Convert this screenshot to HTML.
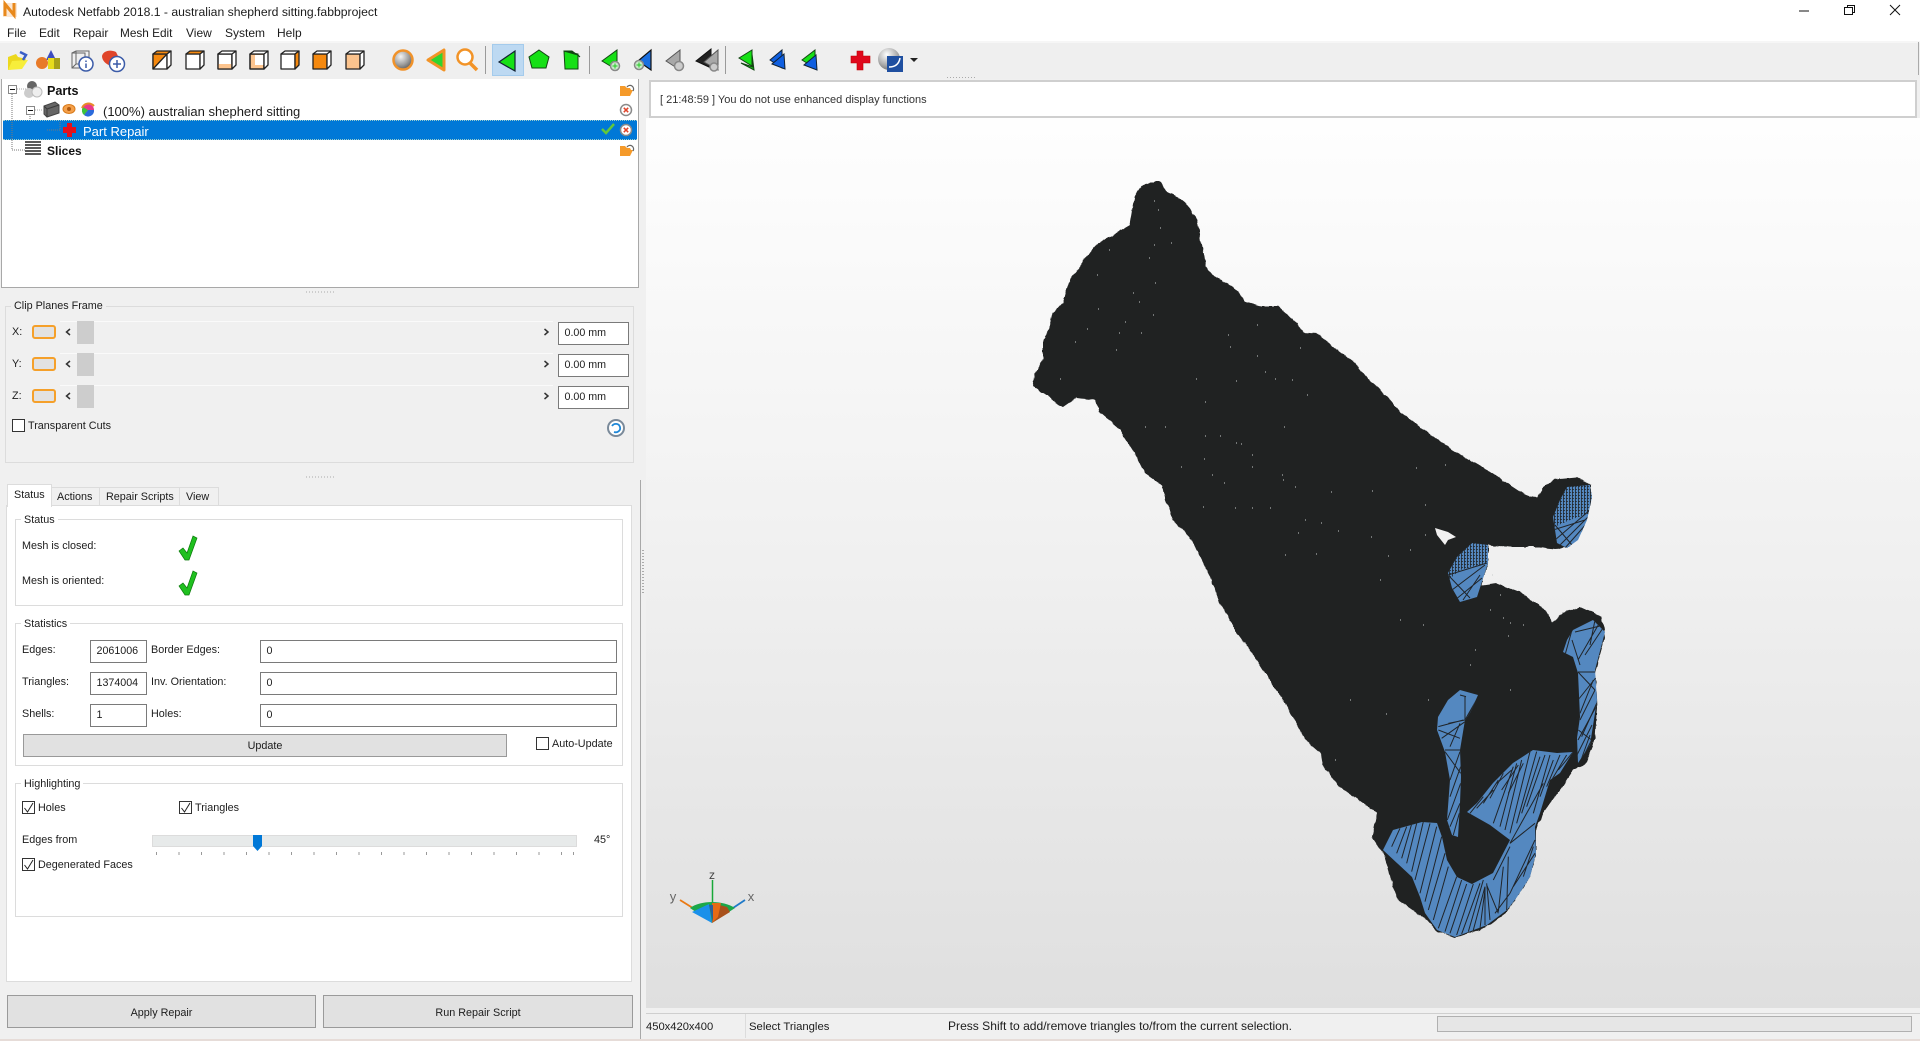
<!DOCTYPE html>
<html><head><meta charset="utf-8"><style>
html,body{margin:0;padding:0;width:1920px;height:1041px;overflow:hidden;background:#f0f0f0}
body{font-family:"Liberation Sans",Arial,sans-serif;font-size:10.8px;color:#1c1c1c;position:relative}
.a,.t,.g,.i,.b,.c{position:absolute;box-sizing:border-box}
.t{white-space:nowrap;line-height:14px;height:14px}
.g{border:1px solid #dcdcdc}
.i{background:#fff;border:1px solid #7a7a7a;height:23px;line-height:21px;padding-left:5.500px;font-size:10.7px}
.b{background:#e1e1e1;border:1px solid #adadad;text-align:center;font-size:10.8px}
.c{width:13px;height:13px;border:1px solid #333;background:#fff}
svg{position:absolute;left:0;top:0}
</style></head><body>
<!-- backgrounds -->
<div class="a" style="left:0;top:0;width:1920px;height:41px;background:#fff"></div>
<div class="a" style="left:0;top:41px;width:1920px;height:38px;background:#efefef;border-top:2px solid #f6f6f6"></div>
<div class="a" style="left:1918px;top:42px;width:1px;height:33px;background:#aaa"></div>
<div class="a" style="left:1px;top:79px;width:638px;height:209px;background:#fff;border:1px solid #a8a8a8;border-top:0"></div>
<div class="a" style="left:646px;top:118px;width:1274px;height:890px;background:linear-gradient(#fefefe,#f0f0f0 50%,#dfdfdf)"></div>
<div class="a" style="left:649px;top:80px;width:1268px;height:38px;background:#fff;border:2px solid #cfcfcf"></div>
<div class="a" style="left:640px;top:480px;width:1px;height:559px;background:#a8a8a8"></div>
<div class="a" style="left:0;top:1039px;width:1920px;height:2px;background:#e6dcd8"></div>
<div class="a" style="left:646px;top:1013px;width:1274px;height:1px;background:#cfcfcf"></div>
<div class="a" style="left:745px;top:1014px;width:1px;height:24px;background:#dcdcdc"></div>
<div class="a" style="left:1437px;top:1016px;width:475px;height:16px;background:#e6e6e6;border:1px solid #b0b0b0"></div>

<!-- title + menu -->
<div class="t" style="left:23px;top:5px;font-size:12.2px">Autodesk Netfabb 2018.1 - australian shepherd sitting.fabbproject</div>
<div class="t" style="left:7px;top:26px;font-size:12px">File</div>
<div class="t" style="left:39px;top:26px;font-size:12px">Edit</div>
<div class="t" style="left:73px;top:26px;font-size:12px">Repair</div>
<div class="t" style="left:120px;top:26px;font-size:11.8px">Mesh Edit</div>
<div class="t" style="left:186px;top:26px;font-size:12px">View</div>
<div class="t" style="left:225px;top:26px;font-size:12px">System</div>
<div class="t" style="left:277px;top:26px;font-size:12px">Help</div>

<!-- tree -->
<div class="a" style="left:3px;top:120px;width:634px;height:20px;background:#0078d7;border-top:1px dotted #9cc;border-bottom:1px dotted #9cc"></div>
<div class="t" style="left:47px;top:84px;font-size:12.6px;font-weight:bold;color:#111">Parts</div>
<div class="t" style="left:103px;top:105px;font-size:13px">(100%) australian shepherd sitting</div>
<div class="t" style="left:83px;top:125px;font-size:13px;color:#fff">Part Repair</div>
<div class="t" style="left:47px;top:144px;font-size:12px;font-weight:bold;color:#111">Slices</div>

<!-- message -->
<div class="t" style="left:660px;top:92.500px;font-size:11px;color:#333">[ 21:48:59 ] You do not use enhanced display functions</div>

<!-- clip frame -->
<div class="g" style="left:5px;top:306px;width:629px;height:157px"></div>
<div class="t" style="left:11px;top:299px;padding:0 3px;background:#f0f0f0">Clip Planes Frame</div>
<div class="t" style="left:12px;top:325px">X:</div><div class="t" style="left:12px;top:357px">Y:</div><div class="t" style="left:12px;top:389px">Z:</div>
<div class="a" style="left:32px;top:325px;width:24px;height:14px;background:#e2e2e2;border:2px solid #f5a02a;border-radius:3px"></div>
<div class="a" style="left:32px;top:357px;width:24px;height:14px;background:#e2e2e2;border:2px solid #f5a02a;border-radius:3px"></div>
<div class="a" style="left:32px;top:389px;width:24px;height:14px;background:#e2e2e2;border:2px solid #f5a02a;border-radius:3px"></div>
<div class="a" style="left:60px;top:321px;width:493px;height:23px;background:#f0f0f0;border-top:1px solid #fafafa"></div>
<div class="a" style="left:60px;top:353px;width:493px;height:23px;background:#f0f0f0;border-top:1px solid #fafafa"></div>
<div class="a" style="left:60px;top:385px;width:493px;height:23px;background:#f0f0f0;border-top:1px solid #fafafa"></div>
<div class="a" style="left:77px;top:321px;width:17px;height:23px;background:#cdcdcd"></div>
<div class="a" style="left:77px;top:353px;width:17px;height:23px;background:#cdcdcd"></div>
<div class="a" style="left:77px;top:385px;width:17px;height:23px;background:#cdcdcd"></div>
<div class="i" style="left:558px;top:322px;width:71px">0.00 mm</div>
<div class="i" style="left:558px;top:354px;width:71px">0.00 mm</div>
<div class="i" style="left:558px;top:386px;width:71px">0.00 mm</div>
<div class="c" style="left:12px;top:419px"></div>
<div class="t" style="left:28px;top:419px">Transparent Cuts</div>

<!-- tabs -->
<div class="a" style="left:6px;top:505px;width:626px;height:477px;background:#fff;border:1px solid #dcdcdc"></div>
<div class="a" style="left:7px;top:484px;width:45px;height:23px;background:#fff;border:1px solid #dcdcdc;border-bottom:0"></div>
<div class="a" style="left:52px;top:487px;width:48px;height:19px;border:1px solid #dcdcdc;border-left:0;background:#f0f0f0"></div>
<div class="a" style="left:100px;top:487px;width:80px;height:19px;border:1px solid #dcdcdc;border-left:0;background:#f0f0f0"></div>
<div class="a" style="left:180px;top:487px;width:39px;height:19px;border:1px solid #dcdcdc;border-left:0;background:#f0f0f0"></div>
<div class="t" style="left:14px;top:488px">Status</div>
<div class="t" style="left:57px;top:490px">Actions</div>
<div class="t" style="left:106px;top:490px">Repair Scripts</div>
<div class="t" style="left:186px;top:490px">View</div>

<!-- status group -->
<div class="g" style="left:15px;top:519px;width:608px;height:87px"></div>
<div class="t" style="left:21px;top:513px;background:#fff;padding:0 3px">Status</div>
<div class="t" style="left:22px;top:539px">Mesh is closed:</div>
<div class="t" style="left:22px;top:574px">Mesh is oriented:</div>

<!-- statistics -->
<div class="g" style="left:15px;top:623px;width:608px;height:143px"></div>
<div class="t" style="left:21px;top:617px;background:#fff;padding:0 3px">Statistics</div>
<div class="t" style="left:22px;top:643px">Edges:</div>
<div class="t" style="left:22px;top:675px">Triangles:</div>
<div class="t" style="left:22px;top:707px">Shells:</div>
<div class="t" style="left:151px;top:643px">Border Edges:</div>
<div class="t" style="left:151px;top:675px">Inv. Orientation:</div>
<div class="t" style="left:151px;top:707px">Holes:</div>
<div class="i" style="left:90px;top:640px;width:57px">2061006</div>
<div class="i" style="left:90px;top:672px;width:57px">1374004</div>
<div class="i" style="left:90px;top:704px;width:57px">1</div>
<div class="i" style="left:260px;top:640px;width:357px">0</div>
<div class="i" style="left:260px;top:672px;width:357px">0</div>
<div class="i" style="left:260px;top:704px;width:357px">0</div>
<div class="b" style="left:23px;top:734px;width:484px;height:23px;line-height:23px;border-color:#999">Update</div>
<div class="c" style="left:536px;top:737px"></div>
<div class="t" style="left:552px;top:737px">Auto-Update</div>

<!-- highlighting -->
<div class="g" style="left:15px;top:783px;width:608px;height:134px"></div>
<div class="t" style="left:21px;top:777px;background:#fff;padding:0 3px">Highlighting</div>
<div class="c" style="left:22px;top:801px"></div><div class="t" style="left:38px;top:801px">Holes</div>
<div class="c" style="left:179px;top:801px"></div><div class="t" style="left:195px;top:801px">Triangles</div>
<div class="t" style="left:22px;top:833px">Edges from</div>
<div class="a" style="left:152px;top:835px;width:425px;height:12px;background:#e7eaea;border:1px solid #dcdcdc"></div>
<div class="t" style="left:594px;top:833px">45°</div>
<div class="c" style="left:22px;top:858px"></div><div class="t" style="left:38px;top:858px">Degenerated Faces</div>

<div class="b" style="left:7px;top:995px;width:309px;height:33px;line-height:34px;border-color:#9a9a9a">Apply Repair</div>
<div class="b" style="left:323px;top:995px;width:310px;height:33px;line-height:34px;border-color:#9a9a9a">Run Repair Script</div>

<!-- status bar -->
<div class="t" style="left:646px;top:1019.500px;font-size:11.2px">450x420x400</div>
<div class="t" style="left:749px;top:1019.500px;font-size:11.3px">Select Triangles</div>
<div class="t" style="left:948px;top:1019px;font-size:12.07px">Press Shift to add/remove triangles to/from the current selection.</div>

<!-- graphics -->
<svg width="1920" height="1041" viewBox="0 0 1920 1041" fill="none">
<defs>
<radialGradient id="sph" cx=".38" cy=".32" r=".75"><stop offset="0" stop-color="#f4f4f4"/><stop offset=".6" stop-color="#9a9a9a"/><stop offset="1" stop-color="#555"/></radialGradient>
<radialGradient id="sph2" cx=".4" cy=".3" r=".8"><stop offset="0" stop-color="#fff"/><stop offset=".6" stop-color="#aaa"/><stop offset="1" stop-color="#666"/></radialGradient>
<filter id="rough" x="-5%" y="-5%" width="110%" height="110%" color-interpolation-filters="sRGB"><feTurbulence type="fractalNoise" baseFrequency=".11" numOctaves="2" seed="4"/><feDisplacementMap in="SourceGraphic" scale="4" xChannelSelector="R" yChannelSelector="G"/></filter>
<pattern id="mesh" width="3" height="3" patternUnits="userSpaceOnUse"><path d="M0 .5H2M.5 0V3" stroke="#202428" stroke-width=".8"/></pattern>
<clipPath id="blue"><path id="bluep" d="M1567 487L1590 485 1592 497 1587 520 1578 540 1567 548 1557 543 1553 517 1560 500ZM1472 543L1488 545 1488 563 1477 597 1460 602 1452 588 1448 573 1457 557ZM1573 630L1593 620 1605 632 1595 670 1597 700 1590 745 1578 763 1577 738 1580 717 1578 673 1573 657 1563 652 1567 640ZM1460 690L1478 695 1470 713 1465 720 1460 750 1461 777 1460 803 1458 837 1452 835 1447 820 1450 780 1445 752 1437 730 1438 717 1448 700ZM1533 750L1557 753 1573 752 1560 773 1550 780 1540 813 1535 827 1536 853 1530 877 1517 897 1507 910 1487 925 1455 937 1437 930 1425 913 1420 897 1412 877 1383 850 1393 830 1422 822 1437 823 1442 837 1447 860 1457 877 1472 884 1493 873 1510 840 1490 825 1467 812 1477 803 1493 783 1513 763Z"/></clipPath>
</defs>

<!-- app icon -->
<path d="M3 3H17V17H3Z" fill="#fbe6d2"/><path d="M5 16V4L14 15V3" stroke="#e8891c" stroke-width="3"/>
<!-- window controls -->
<path d="M1799 11H1809" stroke="#111"/>
<path d="M1844.500 7.500H1852.500V14.500H1844.500ZM1847.500 7.500V5.500H1854.500V12.500H1852.500" stroke="#111"/>
<path d="M1890 5L1900 15M1900 5L1890 15" stroke="#111"/>

<!-- toolbar: file icons -->
<path d="M8 70V57L16 54 18 57 26 59 21 68Z" fill="#ecd81e"/><path d="M8 70L12 61 28 60 22 69Z" fill="#f7ee3a"/><path d="M20 52L26 55 23 60" stroke="#3a5fc8" stroke-width="2.500"/>
<path d="M51 50L56 60H46Z" fill="#3c4cc0"/><circle cx="42" cy="63" r="6" fill="#e87a28"/><rect x="48" y="58" width="12" height="11" fill="#e8dc1c"/><path d="M54 58V69H60V58Z" fill="#a8a018"/>
<path d="M72 53H85V68H72ZM72 53L76 51H89V64L85 68M76 51V64L72 68M76 64H89" stroke="#666"/><circle cx="86" cy="64" r="7" fill="#fff" stroke="#3b5ba8" stroke-width="1.500"/><path d="M86 60.500V62M86 63.500V68" stroke="#3b5ba8" stroke-width="1.500"/>
<path d="M102 56C103 51 110 49 116 52L120 60 111 66C105 64 102 60 102 56Z" fill="#e0452a"/><circle cx="117" cy="64" r="7.500" fill="#fff" stroke="#3b5ba8" stroke-width="1.500"/><path d="M113 64H121M117 60V68" stroke="#3b5ba8" stroke-width="1.500"/>

<!-- view cubes -->
<g stroke="#222" stroke-width="1.300" stroke-linejoin="round">
<g><path d="M153 54H167V69H153Z" fill="#fff"/><path d="M153 54H167L153 69Z" fill="#f5890f"/><path d="M153 54L157 51H171L167 54Z" fill="#f5890f"/><path d="M167 54L171 51V65L167 69Z" fill="#fff"/></g>
<g><path d="M186 54H200V69H186Z" fill="#fff"/><path d="M186 54L190 51H204L200 54Z" fill="#f5890f"/><path d="M200 54L204 51V65L200 69Z" fill="#fff"/></g>
<g><path d="M218 54H232V69H218Z" fill="#fff"/><rect x="218" y="64" width="14" height="5" fill="#fcc48e" stroke="none"/><path d="M218 54H232V69H218Z"/><path d="M218 54L222 51H236L232 54ZM232 54L236 51V65L232 69Z" fill="#fff"/></g>
<g><path d="M250 54H264V69H250Z" fill="#fcc48e"/><rect x="255" y="55" width="9" height="10" fill="#fff" stroke="none"/><path d="M250 54H264V69H250Z"/><path d="M250 54L254 51H268L264 54ZM264 54L268 51V65L264 69Z" fill="#fff"/></g>
<g><path d="M281 54H295V69H281Z" fill="#fff"/><path d="M281 54L285 51H299L295 54Z" fill="#fff"/><path d="M295 54L299 51V65L295 69Z" fill="#f5890f"/></g>
<g><path d="M313 54H327V69H313Z" fill="#f5890f"/><path d="M313 54L317 51H331L327 54ZM327 54L331 51V65L327 69Z" fill="#fff"/></g>
<g><path d="M346 54H360V69H346Z" fill="#fcc48e"/><path d="M346 54L350 51H364L360 54ZM360 54L364 51V65L360 69Z" fill="#fff"/></g>
</g>
<circle cx="403" cy="60" r="9.500" fill="url(#sph)" stroke="#f0922a" stroke-width="2.500"/>
<path d="M428 60L444 50V70Z" fill="#2fd42f" stroke="#f29327" stroke-width="3" stroke-linejoin="round"/>
<circle cx="465" cy="57" r="7.500" fill="#fff" stroke="#f29327" stroke-width="2.500"/><path d="M470 63L477 70" stroke="#f29327" stroke-width="3.500"/>

<path d="M485.500 46V74M589.500 46V74M725.500 46V74" stroke="#9a9a9a"/>
<rect x="492.500" y="44.500" width="31" height="31" fill="#bdd9f2" stroke="#a4cbec"/>
<path d="M499 62L515 51V71Z" fill="#16e016" stroke="#123" stroke-width="1.200"/>
<path d="M539 50L549 57 546 68H532L529 57Z" fill="#16e016" stroke="#124512"/>
<path d="M564 51L578 54V69L565 69Z" fill="#16e016" stroke="#124512"/><path d="M564 51L572 51 580 57 578 55Z" fill="#124512" stroke="#124512"/>
<path d="M602 61L617 50V70Z" fill="#16e016" stroke="#124512"/><circle cx="615" cy="66" r="4.500" fill="#c8e8c8" stroke="#888" stroke-width="1.500"/><path d="M612.500 66H617.500M615 63.500V68.500" stroke="#2c2"/>
<path d="M638 61L651 50V70Z" fill="#1a6fe0" stroke="#111" stroke-width="1.200"/><circle cx="639" cy="65" r="4.500" fill="#c8e8c8" stroke="#888" stroke-width="1.500"/><path d="M636.500 65H641.500M639 62.500V67.500" stroke="#2c2"/>
<path d="M666 61L680 50V70Z" fill="#a8a8a8" stroke="#555"/><circle cx="679" cy="66" r="4.500" fill="#ccc" stroke="#888" stroke-width="1.500"/>
<path d="M696 61L711 49V68Z" fill="#222" stroke="#111"/><path d="M704 62L718 50V70Z" fill="#a8a8a8" stroke="#555"/><circle cx="714" cy="67" r="4" fill="#ccc" stroke="#888" stroke-width="1.500"/>
<path d="M739 58L752 50V66Z" fill="#16e016" stroke="#124512"/><path d="M741 63L753 67 752 54 754 70Z" fill="#16c016" stroke="#124512"/>
<path d="M770 60L782 50V68Z" fill="#0f5fe0" stroke="#123"/><path d="M772 64L785 69 784 54Z" fill="#0f5fe0" stroke="#123"/>
<path d="M802 60L815 50V68Z" fill="#16e016" stroke="#124512"/><path d="M804 65L817 70 816 55Z" fill="#0f5fe0" stroke="#123"/>
<path d="M851 56H857V51H863V56H870V63H863V70H857V63H851Z" fill="#e0081c" stroke="#b00" stroke-width=".6"/>
<circle cx="889" cy="59" r="11" fill="url(#sph2)"/><rect x="887" y="56" width="16" height="16" fill="#1f4fa0"/><path d="M889 67C895 67 899 64 900 58" stroke="#fff" stroke-width="1.500"/>
<path d="M910 58H918L914 62Z" fill="#222"/>
<path d="M947 77.500H975" stroke="#aaa" stroke-dasharray="1 2"/>

<!-- tree icons -->
<path d="M12 94V150H25M30 116V120M47 130H60V121" stroke="#777" stroke-dasharray="1 1"/>
<path d="M17 89H26M35 110H42" stroke="#aaa" stroke-dasharray="1 1"/>
<rect x="8.500" y="85.500" width="8" height="8" fill="#fff" stroke="#888"/><path d="M10 89.500H15" stroke="#111"/>
<rect x="26.500" y="106.500" width="8" height="8" fill="#fff" stroke="#888"/><path d="M28 110.500H33" stroke="#111"/>
<circle cx="32" cy="86" r="5" fill="#666"/><circle cx="29" cy="93" r="5" fill="#ccc"/><circle cx="37" cy="92" r="5" fill="#eee" stroke="#bbb"/>
<path d="M44 106L55 102 59 105V113L47 117 44 114Z" fill="#666" stroke="#444"/><path d="M44 106L47 109 59 105M47 109V117" stroke="#3a3a3a"/>
<ellipse cx="69" cy="109" rx="6" ry="4.500" fill="#f5a04a" stroke="#d77a1a"/><circle cx="69" cy="109" r="2" fill="#b05a10"/>
<circle cx="88" cy="110" r="6" fill="#e83a8a"/><path d="M88 110L94 110A6 6 0 0 1 84 115Z" fill="#2b6bdc"/><path d="M88 110L84 115A6 6 0 0 1 83 107Z" fill="#3bc43b"/><path d="M82 108C84 103 90 102 94 106" stroke="#e88a2a" stroke-width="2"/>
<path d="M63 127H67V123H72V127H76V133H72V137H67V133H63Z" fill="#e3101c"/>
<path d="M25 142H41M25 145H41M25 148H41M25 151H41M25 154H41" stroke="#222" stroke-width="1.500"/>
<path d="M620 86H625L627 88H630L631 90H624L620 96ZM620 96L624 90H633L630 96Z" fill="#f59a2a"/><path d="M627 87A3.500 3.500 0 0 1 633 91" stroke="#666" stroke-width="1.200"/>
<path d="M620 146H625L627 148H630L631 150H624L620 156ZM620 156L624 150H633L630 156Z" fill="#f59a2a"/><path d="M627 147A3.500 3.500 0 0 1 633 151" stroke="#666" stroke-width="1.200"/>
<circle cx="626" cy="110" r="5.500" fill="#fff" stroke="#8a8a8a" stroke-width="1.500"/><path d="M623.800 107.800L628.200 112.200M628.200 107.800L623.800 112.200" stroke="#e0442a" stroke-width="1.500"/>
<circle cx="626" cy="130" r="5.500" fill="#fff" stroke="#8a8a8a" stroke-width="1.500"/><path d="M623.800 127.800L628.200 132.200M628.200 127.800L623.800 132.200" stroke="#e0442a" stroke-width="1.500"/>
<path d="M602 129L606 133 614 124" stroke="#62c83a" stroke-width="2.500"/>
<!-- splitter dots -->
<path d="M306 292H336M306 477H336" stroke="#aaa" stroke-dasharray="1 2"/>
<path d="M643 550V595" stroke="#aaa" stroke-dasharray="1 2" stroke-width="2"/>
<!-- clip arrows -->
<g stroke="#333" stroke-width="1.500"><path d="M70 329L66.500 332 70 335M70 361L66.500 364 70 367M70 393L66.500 396 70 399M544.500 329L548 332 544.500 335M544.500 361L548 364 544.500 367M544.500 393L548 396 544.500 399"/></g>
<circle cx="616" cy="428" r="8" fill="#fff" stroke="#7a8a9a" stroke-width="2"/><path d="M612 426C614 423 619 423 620 427S617 433 614 432" stroke="#1f88d8" stroke-width="1.800"/>
<!-- checks -->
<g fill="#1fc01f" stroke="#0b7a0b" stroke-width=".7"><path d="M179 551L183 548 187 553 193 536 197 538 189 560H185Z"/><path d="M179 586L183 583 187 588 193 571 197 573 189 595H185Z"/></g>
<path d="M24.500 808L27.500 812 33 803M181.500 808L184.500 812 190 803M24.500 865L27.500 869 33 860" stroke="#222"/>
<!-- slider -->
<path d="M253 835H262V846L257.500 851 253 846Z" fill="#0078d7"/>
<g stroke="#999"><path d="M156.500 852V855M179 852V855M201.500 852V855M224 852V855M246.500 852V855M269 852V855M291.500 852V855M314 852V855M336.500 852V855M359 852V855M381.500 852V855M404 852V855M426.500 852V855M449 852V855M471.500 852V855M494 852V855M516.500 852V855M539 852V855M561.500 852V855M573.500 852V855"/></g>

<!-- dog silhouette -->
<path filter="url(#rough)" fill="#202222" d="M1135 195L1141 186 1151 182 1161 182 1167 192 1178 197 1188 205 1197 220 1202 247 1206 267 1212 274 1229 285 1239 292 1244 301 1261 306 1278 306 1286 313 1304 332 1316 333 1335 348 1355 363 1367 378 1388 397 1400 412 1450 448 1487 470 1522 493 1537 498 1543 488 1555 479 1576 477 1591 485 1591 503 1582 532 1567 548 1555 549 1539 547 1510 547 1488 545 1488 560 1482 585 1497 583 1520 592 1543 607 1552 623 1563 613 1580 607 1602 617 1605 637 1595 673 1597 707 1595 740 1585 765 1573 770 1562 787 1543 813 1536 830 1536 857 1530 877 1517 897 1507 912 1487 927 1455 938 1437 931 1427 920 1398 900 1393 887 1383 853 1372 837 1377 813 1340 787 1322 765 1320 753 1305 740 1287 707 1257 660 1237 633 1217 597 1210 577 1200 557 1192 540 1173 520 1165 500 1162 485 1145 473 1137 457 1120 430 1100 413 1096 400 1076 398 1063 407 1043 393 1033 387 1035 373 1043 360 1043 340 1049 330 1053 313 1063 302 1071 278 1084 260 1098 243 1118 232 1130 225Z"/>
<!-- hole -->
<path d="M1435 528L1448 532 1456 537 1448 540 1445 545 1437 535Z" fill="#f1f1f1"/>
<!-- blue areas -->
<path fill="#5488c0" d="M1567 487L1590 485 1592 497 1587 520 1578 540 1567 548 1557 543 1553 517 1560 500ZM1472 543L1488 545 1488 563 1477 597 1460 602 1452 588 1448 573 1457 557ZM1573 630L1593 620 1605 632 1595 670 1597 700 1590 745 1578 763 1577 738 1580 717 1578 673 1573 657 1563 652 1567 640ZM1460 690L1478 695 1470 713 1465 720 1460 750 1461 777 1460 803 1458 837 1452 835 1447 820 1450 780 1445 752 1437 730 1438 717 1448 700ZM1533 750L1557 753 1573 752 1560 773 1550 780 1540 813 1535 827 1536 853 1530 877 1517 897 1507 910 1487 925 1455 937 1437 930 1425 913 1420 897 1412 877 1383 850 1393 830 1422 822 1437 823 1442 837 1447 860 1457 877 1472 884 1493 873 1510 840 1490 825 1467 812 1477 803 1493 783 1513 763Z"/>
<g clip-path="url(#blue)">
<!-- dense triangles on foot tips -->
<path fill="url(#mesh)" d="M1555 483H1595L1593 512 1570 520 1552 528ZM1445 540H1490L1490 562 1460 570 1446 582Z"/>
<g stroke="#202428" stroke-width="1">
<path d="M1555 540L1590 510M1560 545L1590 515M1565 548L1588 522M1555 525L1572 545M1553 530L1585 520"/>
<path d="M1452 590L1485 565M1455 600L1482 578M1450 577L1470 598M1463 600L1480 575M1448 575L1487 563"/>
<path d="M1575 632L1600 626M1578 660L1600 622M1585 655L1605 625M1572 640L1580 665M1590 645L1595 620M1578 672L1597 672M1578 672L1595 690M1578 700L1598 675M1580 720L1595 690M1578 740L1597 705M1577 755L1592 725M1581 760L1590 735M1565 655L1572 630"/>
</g>
<!-- coordinates below are 3x local, origin 1370,680 -->
<g transform="translate(1370 680) scale(.3333)" stroke="#202428" stroke-width="3">
<path d="M65 500L90 445M80 520L110 440M95 535L125 432M110 550L140 430M125 575L160 425M135 600L180 430M150 640L200 440M165 665L215 470M175 690L225 520M190 720L235 560"/>
<path d="M205 745L260 590M225 755L275 600M240 760L290 612M260 765L310 612M275 762L330 610M295 755L340 600M310 750L345 620M330 745L345 630M345 735L345 620M360 720L350 610M350 615L385 700M375 700L420 640M385 695L400 560M410 690L415 530M370 600L420 500"/>
<path d="M420 640L495 480M430 620L495 520M460 590L490 500M420 490L495 430"/>
<path d="M300 400L340 350M320 385L370 330M340 370L385 300M360 355L400 280M370 430L430 260M390 440L440 250M405 450L455 240M420 460L480 215M440 430L500 215M455 400L510 230M470 380L525 225M490 400L540 225M510 350L550 240M530 320L570 225M545 300L590 225M565 270L610 215M420 490L520 310"/>
<path d="M380 310L425 270M395 330L445 255M415 340L460 250"/>
<path d="M235 130L285 120M205 140L280 120M205 150L270 175M215 175L285 125M225 210L275 210M240 200L270 130M225 215L272 280M240 300L270 215M240 350L272 260M232 420L272 310M240 440L270 370M250 465L268 400M285 50L285 120M285 120L325 50M295 105L325 60M270 45L288 50"/>
<path d="M630 100L670 0M635 170L680 70M640 230L670 170M625 150L665 180"/>
</g>
</g>
<!-- specks -->
<path stroke="#c8cccc" stroke-width="1.100" stroke-dasharray="1 40" d="M1154 201h1M1158 210h1M1160 228h1M1154 245h1M1171 243h1M1149 258h1M1109 250h1M1097 275h1M1155 283h1M1133 293h1M1139 302h1M1098 309h1M1153 315h1M1125 322h1M1087 329h1M1075 342h1M1119 333h1M1141 333h1M1116 350h1M1228 335h1M1257 325h1M1230 347h1M1300 348h1M1257 356h1M1060 379h1M1196 379h1M1236 381h1M1265 372h1M1275 379h1M1292 380h1M1307 395h1M1205 402h1M1145 427h1M1165 427h1M1284 427h1M1205 436h1M1220 436h1M1236 443h1M1241 444h1M1181 467h1M1204 459h1M1252 455h1M1252 467h1M1212 475h1M1282 475h1M1283 480h1M1416 468h1M1445 465h1M1224 483h1M1295 487h1M1331 492h1M1372 491h1M1203 507h1M1235 508h1M1252 508h1M1270 508h1M1305 520h1M1321 523h1M1338 531h1M1298 533h1M1371 537h1M1285 555h1M1316 554h1M1388 556h1M1425 535h1M1500 595h1M1490 610h1M1503 618h1M1510 623h1M1508 636h1M1523 625h1M1400 620h1M1423 625h1M1470 665h1M1428 700h1M1410 550h1M1380 580h1M1425 505h1M1492 575h1M1475 650h1M1510 690h1M1386 714h1M1350 700h1M1335 760h1"/>

<!-- axes -->
<path d="M712.500 880V914" stroke="#18a838" stroke-width="1.500"/>
<path d="M680 900L696 910" stroke="#ea7a14" stroke-width="1.800"/>
<path d="M745 900L730 910" stroke="#1f7ac8" stroke-width="1.800"/>
<path d="M690 908C695 904 704 902 712 902S729 904 735 908L712 923Z" fill="#1ba84a"/>
<path d="M692 912L709 904 712 923Z" fill="#1a90ea"/>
<path d="M712 903L727 907 730 912 712 923Z" fill="#a8501a"/>
<path d="M712 903H721L718 917 712 923Z" fill="#e56a14"/>
<path d="M709 905H713V923Z" fill="#2a5f9a"/>
<text x="712" y="879" font-family="Liberation Sans" font-size="12" fill="#444" text-anchor="middle">z</text>
<text x="673" y="901" font-family="Liberation Sans" font-size="13" fill="#666" text-anchor="middle">y</text>
<text x="751" y="901" font-family="Liberation Sans" font-size="13" fill="#666" text-anchor="middle">x</text>
</svg>
</body></html>
